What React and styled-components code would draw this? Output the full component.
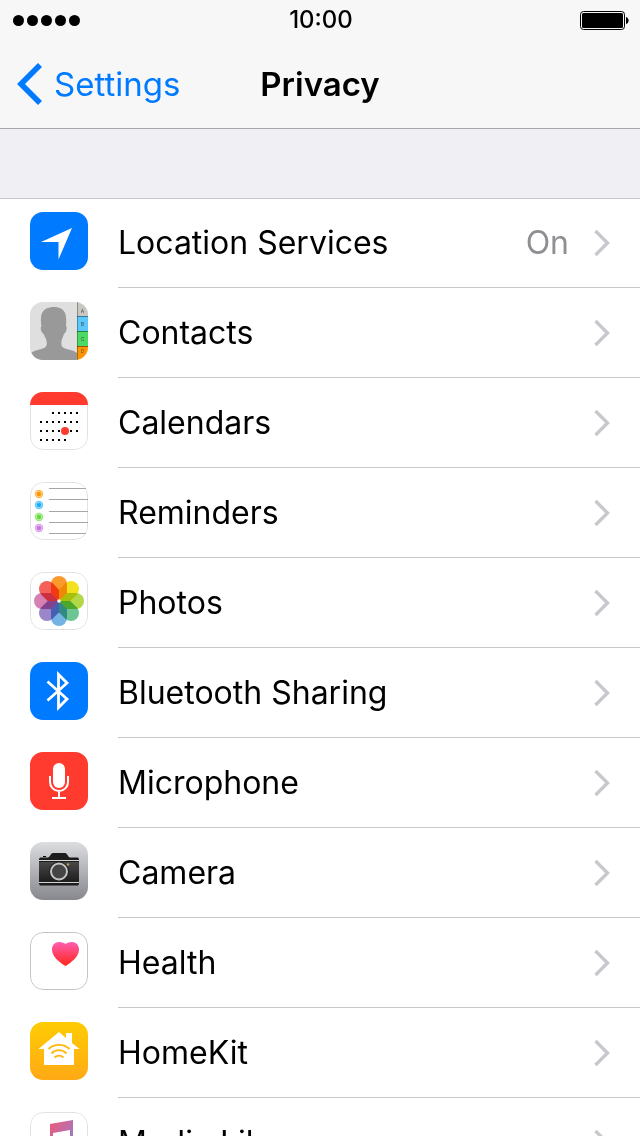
import styled, { createGlobalStyle } from "styled-components";

const GlobalStyle = createGlobalStyle`
    * {
        box-sizing: border-box;
    }
    body {
        margin: 0;
        background-color: #fff;
        font-family: Inter, "Liberation Sans", sans-serif;
        color: #000;
    }
`;

const Container = styled.div`
    display: flex;
    flex-direction: column;
    height: 100vh;
    background-color: #efeff4;
`;

const Header = styled.header`
    background-color: #f7f7f7;
    border-bottom: 1px solid #a7a7ab;
`;

const StatusBar = styled.div`
    display: grid;
    grid-template-columns: 1fr auto 1fr;
    align-items: center;
    height: 40px;
    padding: 0 11px 0 13px;
`;

const Signal = styled.div`
    display: flex;
    gap: 3px;
`;

const Dot = styled.span`
    width: 11px;
    height: 11px;
    border-radius: 50%;
    background-color: #000;
`;

const Time = styled.span`
    font-size: 24px;
    font-weight: 500;
    line-height: 40px;
`;

const Battery = styled.svg`
    justify-self: end;
`;

const NavBar = styled.nav`
    display: grid;
    grid-template-columns: 1fr auto 1fr;
    align-items: center;
    height: 88px;
    padding: 0 16px;
`;

const BackLink = styled.a`
    display: flex;
    align-items: center;
    gap: 11px;
    color: #007aff;
    font-size: 33px;
    line-height: 40px;
    text-decoration: none;
`;

const Title = styled.h1`
    margin: 0;
    font-size: 33px;
    font-weight: 600;
    line-height: 40px;
`;

const List = styled.ul`
    flex: 1;
    margin: 69px 0 0;
    padding: 0;
    list-style: none;
    overflow-y: auto;
    scrollbar-width: none;
    background-color: #fff;
    box-shadow: inset 0 1px #c8c7cc;
`;

const Row = styled.a`
    display: flex;
    align-items: center;
    gap: 30px;
    height: 90px;
    padding-left: 30px;
    color: inherit;
    text-decoration: none;
`;

const Icon = styled.svg`
    flex: none;
    margin-bottom: 4px;
    border-radius: 13px;
`;

const RowBody = styled.div`
    display: flex;
    flex: 1;
    align-items: center;
    gap: 25px;
    height: 100%;
    padding-right: 30px;
    border-bottom: 1px solid #c8c7cc;
    font-size: 32px;
    line-height: 40px;
`;

const Label = styled.span`
    flex: 1;
`;

const Value = styled.span`
    color: #8e8e93;
`;

const Tile = ({ fill = "#fff", border, children }) => (
    <Icon width="58" height="58" viewBox="0 0 58 58" aria-hidden="true">
        <rect width="58" height="58" fill={fill} />
        {border && <rect x="0.5" y="0.5" width="57" height="57" rx="12.5" fill="none" stroke={border} />}
        {children}
    </Icon>
);

const LocationIcon = () => (
    <Tile fill="#007aff">
        <path d="M42 16 28.5 47.5V30H11Z" fill="#fff" />
    </Tile>
);

const tabs = [
    { letter: "A", y: 0, baseline: 11, color: "#c9c7c2" },
    { letter: "B", y: 14, baseline: 24, color: "#5ac8fa" },
    { letter: "C", y: 29, baseline: 39, color: "#4cd964" },
    { letter: "D", y: 44, baseline: 51, color: "#ff9500" },
];

const ContactsIcon = () => (
    <Tile fill="#dfdfdf">
        <path
            d="M0 52C3 48 11 48 15 45.5C17.5 43.5 17 40 16 37C14 33 13.5 31 12.5 31C11 29 10 25 11.5 24C10 14 11 5 24 5C36 5 37 14 36 24C37.5 25 36.5 29 35 31C34 31 33.5 34 32 37C31 40 31 44 33 45.5C37 48 44 48 47 51V58H0Z"
            fill="#999"
        />
        {tabs.map(({ letter, y, baseline, color }) => (
            <g key={letter}>
                <rect x="47" y={y} width="11" height="15" fill={color} />
                {y > 0 && <path d={`M47 ${y}.5H58`} stroke="#000" strokeOpacity="0.4" />}
                <text x="52.5" y={baseline} fontSize="5" textAnchor="middle" fill="#333" fillOpacity="0.8">{letter}</text>
            </g>
        ))}
        <path d="M47.5 0V58" stroke="#000" strokeOpacity="0.3" />
    </Tile>
);

const CalendarIcon = () => (
    <Tile border="#e2e2e2">
        <g stroke="#000" strokeWidth="2" strokeDasharray="2 4">
            <path d="M22 21H48" />
            <path d="M10 30H48" />
            <path d="M10 39H48" />
            <path d="M10 48H36" />
        </g>
        <circle cx="35" cy="39" r="4" fill="#ff3b30" />
        <path d="M0 0H58V13H0Z" fill="#ff3b30" />
    </Tile>
);

const reminders = [
    { y: 12, color: "#ff9500" },
    { y: 23, color: "#1badf8" },
    { y: 35, color: "#63da38" },
    { y: 46, color: "#cc73e1" },
];

const RemindersIcon = () => (
    <Tile border="#e2e2e2">
        <path d="M19 6.5H56M19 17.5H58M19 29.5H58M19 40.5H58M19 51.5H56" stroke="#a5a5aa" />
        {reminders.map(({ y, color }) => (
            <g key={y} fill={color}>
                <circle cx="9" cy={y} r="4.2" fillOpacity="0.7" />
                <circle cx="9" cy={y} r="2.8" stroke="#fff" strokeWidth="0.5" />
            </g>
        ))}
    </Tile>
);

const Petal = styled.path`
    mix-blend-mode: multiply;
`;

const petals = ["#fb9a2c", "#f2e21d", "#b2d848", "#6cc592", "#74b4e4", "#9a86c8", "#d680b4", "#f4605a"];

const PhotosIcon = () => (
    <Tile border="#e2e2e2">
        {petals.map((color, i) => (
            <Petal key={color} d="M21 12A8 8 0 0 1 37 12V21L29 29 21 21Z" fill={color} transform={`rotate(${i * 45} 29 29)`} />
        ))}
        <circle cx="29" cy="29" r="1.8" fill="#fff" />
    </Tile>
);

const BluetoothIcon = () => (
    <Tile fill="#007aff">
        <path d="M17.5 19.5 37 37 28.5 45.5V12.5L37 21 17.5 38.5" fill="none" stroke="#fff" strokeWidth="2.8" />
    </Tile>
);

const MicrophoneIcon = () => (
    <Tile fill="#ff3b30">
        <rect x="23" y="11" width="12" height="25" rx="6" fill="#fff" />
        <path d="M20 24V30A9 9 0 0 0 38 30V24M29 39V46M22 46H36" fill="none" stroke="#fff" strokeWidth="2" />
    </Tile>
);

const CameraIcon = () => (
    <Tile fill="url(#camera-bg)">
        <defs>
            <linearGradient id="camera-bg" x2="0" y2="1">
                <stop stopColor="#dcdddf" />
                <stop offset="1" stopColor="#87888e" />
            </linearGradient>
            <linearGradient id="camera-body" x2="0" y2="1">
                <stop stopColor="#484848" />
                <stop offset="1" stopColor="#1d1d1d" />
            </linearGradient>
        </defs>
        <path d="M9 17 10 15.5H18C20 15.5 20.5 11 23 11H35C37.5 11 38 15.5 40 15.5H48L49 17V42L48 43.5H10L9 42Z" fill="#1c1c1c" />
        <rect x="13" y="14" width="3" height="1" fill="#000" />
        <rect x="9" y="20" width="40" height="20" fill="url(#camera-body)" />
        <path d="M9 18.5H49M9 40.5H49" stroke="#d4d4d6" />
        <circle cx="29" cy="29.5" r="10" fill="#222" />
        <circle cx="29" cy="29.5" r="8" fill="#454545" stroke="#c4c4c6" strokeWidth="2" />
        <circle cx="38" cy="22.5" r="1.2" fill="#b9a04a" />
    </Tile>
);

const HealthIcon = () => (
    <Tile border="#c4c4c6">
        <defs>
            <linearGradient id="heart" x2="0" y2="1">
                <stop stopColor="#ff5db1" />
                <stop offset="1" stopColor="#ff2618" />
            </linearGradient>
        </defs>
        <path d="M35.5 34C29 30 22 24.5 22 17.5C22 13 25 10 29 10C32 10 34.5 11 35.5 12C36.5 11 39 10 42 10C46 10 49 13 49 17.5C49 24.5 42 30 35.5 34Z" fill="url(#heart)" />
    </Tile>
);

const HomeKitIcon = () => (
    <Tile fill="url(#home-bg)">
        <defs>
            <linearGradient id="home-bg" x2="0" y2="1">
                <stop stopColor="#ffcc02" />
                <stop offset="1" stopColor="#ffa915" />
            </linearGradient>
        </defs>
        <path d="M29 10 36 16V11H42V21L49.5 27H44V43H14V27H8.5Z" fill="#fff" />
        <path d="M18.5 27C24 21.5 34 21.5 39.5 27M21.5 31.5C25.5 27 32.5 27 36.5 31.5M24.5 35.5C27 33 31 33 33.5 35.5" fill="none" stroke="#ffb90c" strokeWidth="1.9" />
    </Tile>
);

const MusicIcon = () => (
    <Tile border="#e2e2e2">
        <defs>
            <linearGradient id="note" x2="1" y2="1">
                <stop stopColor="#ff5263" />
                <stop offset="0.5" stopColor="#c06ca8" />
                <stop offset="1" stopColor="#5a9df0" />
            </linearGradient>
        </defs>
        <path d="M20 12 43 8V42C43 50 32 50 32 44C32 39 40 39 40 36V18L23 21V47C23 54 12 53 12 47C12 42 20 43 20 38Z" fill="url(#note)" />
    </Tile>
);

const Chevron = () => (
    <svg width="16" height="28" viewBox="0 0 16 28" aria-hidden="true">
        <path d="M1.5 2 13.5 14 1.5 26" fill="none" stroke="#c7c7cc" strokeWidth="3.4" />
    </svg>
);

const items = [
    { label: "Location Services", value: "On", icon: LocationIcon },
    { label: "Contacts", icon: ContactsIcon },
    { label: "Calendars", icon: CalendarIcon },
    { label: "Reminders", icon: RemindersIcon },
    { label: "Photos", icon: PhotosIcon },
    { label: "Bluetooth Sharing", icon: BluetoothIcon },
    { label: "Microphone", icon: MicrophoneIcon },
    { label: "Camera", icon: CameraIcon },
    { label: "Health", icon: HealthIcon },
    { label: "HomeKit", icon: HomeKitIcon },
    { label: "Media Library", icon: MusicIcon },
];

const App = () => {
    return <>
        <GlobalStyle />
        <Container>
            <Header>
                <StatusBar>
                    <Signal>
                        {[1, 2, 3, 4, 5].map((n) => <Dot key={n} />)}
                    </Signal>
                    <Time>10:00</Time>
                    <Battery width="49" height="19" viewBox="0 0 49 19" aria-hidden="true">
                        <rect x="0.5" y="0.5" width="44" height="18" rx="3" fill="none" stroke="#000" />
                        <rect x="2" y="2" width="41" height="15" rx="1.5" />
                        <path d="M46 6C49.5 7 49.5 12 46 13Z" />
                    </Battery>
                </StatusBar>
                <NavBar>
                    <BackLink href="#settings">
                        <svg width="27" height="42" viewBox="0 0 27 42" aria-hidden="true">
                            <path d="M24 2 5 21 24 40" fill="none" stroke="#007aff" strokeWidth="5.6" />
                        </svg>
                        Settings
                    </BackLink>
                    <Title>Privacy</Title>
                </NavBar>
            </Header>
            <List>
                {items.map(({ label, value, icon: ItemIcon }) => (
                    <li key={label}>
                        <Row href="#">
                            <ItemIcon />
                            <RowBody>
                                <Label>{label}</Label>
                                {value && <Value>{value}</Value>}
                                <Chevron />
                            </RowBody>
                        </Row>
                    </li>
                ))}
            </List>
        </Container>
    </>
}

export default App;
